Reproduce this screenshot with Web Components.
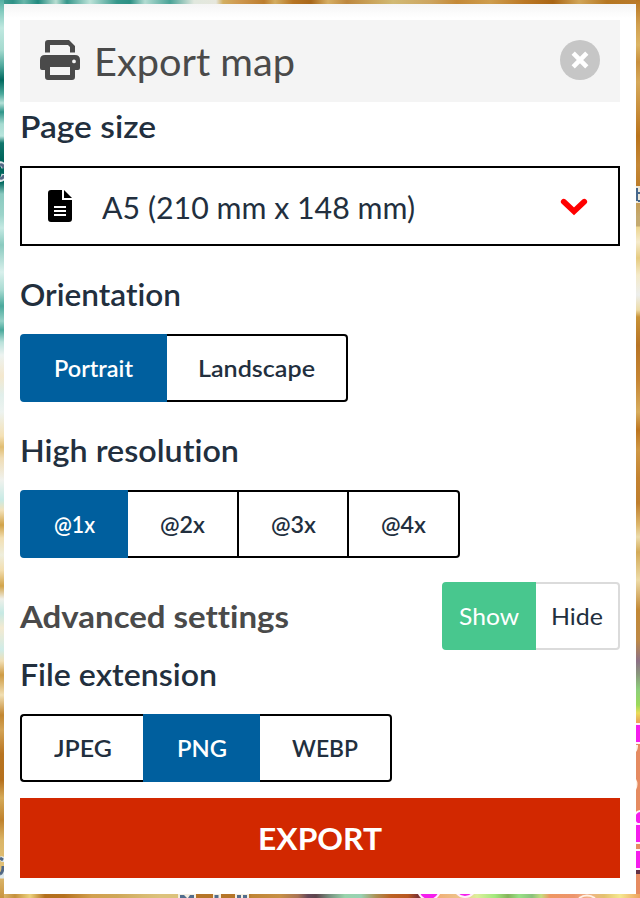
<!DOCTYPE html>
<html lang="en">
<head>
<meta charset="utf-8">
<title>Export map</title>
<style>
html,body{margin:0;padding:0;width:640px;height:898px;overflow:hidden}
body{font-family:Lato,"Open Sans",sans-serif;color:#222f3e}
</style>
</head>
<body>
<map-page></map-page>
<script>
class FitLabel extends HTMLElement {
  connectedCallback() {
    const root = this.attachShadow({mode: 'open'});
    const target = Number(this.getAttribute('width'));
    root.innerHTML = `<style>
      :host{display:block;flex:none;width:${target}px;white-space:pre;line-height:1;font-kerning:normal;font-variant-ligatures:none}
      span{display:inline-block;transform-origin:0 50%}
    </style><span><slot></slot></span>`;
    const span = root.querySelector('span');
    const natural = span.getBoundingClientRect().width;
    span.style.transform = `scaleX(${(target / natural).toFixed(4)})`;
  }
}
customElements.define('fit-label', FitLabel);

class MapBackdrop extends HTMLElement {
  connectedCallback() {
    const vertical = (id, stops) => `<linearGradient id="${id}" gradientUnits="userSpaceOnUse" x1="0" y1="0" x2="0" y2="898">${stops.map(([p, c]) => `<stop offset="${p / 898}" stop-color="${c}"/>`).join('')}</linearGradient>`;
    const horizontal = (id, stops) => `<linearGradient id="${id}" gradientUnits="userSpaceOnUse" x1="0" y1="0" x2="640" y2="0">${stops.map(([p, c]) => `<stop offset="${p / 640}" stop-color="${c}"/>`).join('')}</linearGradient>`;
    this.attachShadow({mode: 'open'}).innerHTML = `<style>:host{display:block;width:640px;height:898px}svg{display:block}</style>
    <svg width="640" height="898" viewBox="0 0 640 898"><defs>
    ${vertical('l', [[0,'#54b0a2'],[12,'#86ccc0'],[28,'#c0e8e0'],[50,'#a5dacf'],[66,'#4fa89c'],[80,'#00695f'],[94,'#4ba89b'],[103,'#b5e1d8'],[112,'#2f9589'],[124,'#a6dbd1'],[136,'#b9e5dd'],[143,'#11766c'],[160,'#00645a'],[182,'#00675e'],[194,'#8ac9bf'],[215,'#9cd4ca'],[228,'#c5e9e3'],[245,'#8acabf'],[272,'#d9f0ec'],[290,'#a9dbd2'],[306,'#4aa99c'],[321,'#95d1c7'],[330,'#49a89b'],[342,'#b9e1da'],[355,'#edf3f1'],[376,'#f4e8ce'],[395,'#e1efeb'],[412,'#edf3f0'],[436,'#f4e1b6'],[447,'#e0bd72'],[458,'#efdcb4'],[480,'#f0f2ee'],[500,'#c8eae5'],[510,'#f3e2bb'],[525,'#d1a349'],[538,'#f2dfb2'],[555,'#eeeedd'],[570,'#f2deb0'],[586,'#d2a44a'],[599,'#eff0ea'],[613,'#c6e9e4'],[628,'#f4ead1'],[650,'#cfece8'],[661,'#f1dfb5'],[675,'#ce9b44'],[695,'#f1dfb3'],[715,'#c28630'],[730,'#d3a356'],[754,'#b87420'],[780,'#b5701d'],[798,'#d5aa59'],[820,'#bf812c'],[840,'#dab466'],[870,'#e2c27a'],[898,'#c89340']])}
    ${vertical('r', [[0,'#b8741f'],[25,'#d1a050'],[45,'#dcb565'],[62,'#c88f3d'],[82,'#d6a95a'],[110,'#c88e3b'],[136,'#b9731b'],[165,'#c48736'],[186,'#bd7d29'],[203,'#c69d56'],[217,'#c4aa70'],[226,'#c4aa70'],[227,'#edd691'],[242,'#f5ebcd'],[258,'#e6cb80'],[275,'#f4eac9'],[295,'#eceeed'],[310,'#eddba6'],[317,'#c89236'],[345,'#b77425'],[380,'#c68533'],[412,'#d7ad5e'],[430,'#bd751f'],[450,'#cf9845'],[478,'#c38230'],[503,'#bf7e2d'],[525,'#ddb76c'],[537,'#ecdcac'],[552,'#d3aa57'],[580,'#eddba7'],[610,'#c28835'],[640,'#bd8946'],[661,'#8c7186'],[674,'#89967c'],[690,'#8dcf7b'],[705,'#9bda5a'],[713,'#e9dc5a'],[721,'#eba95a'],[740,'#e58b62'],[898,'#e78b61']])}
    ${horizontal('t', [[0,'#49a092'],[13,'#2f9287'],[24,'#68b6a9'],[38,'#218a7f'],[56,'#b9ded2'],[67,'#36978b'],[90,'#bde3d9'],[117,'#36978b'],[130,'#2c9084'],[145,'#b3dcd2'],[170,'#4aa397'],[194,'#e1e8de'],[216,'#e6e7dd'],[223,'#d2af61'],[238,'#cf9950'],[264,'#bc7d2e'],[275,'#d3ad60'],[293,'#b67423'],[311,'#a8671a'],[328,'#d6ae63'],[347,'#bd873e'],[374,'#cba65d'],[393,'#d1ba75'],[430,'#cda560'],[457,'#c48937'],[490,'#ce9d4d'],[524,'#bb7825'],[553,'#a96515'],[579,'#d1a558'],[607,'#b57722'],[640,'#b9792a']])}
    ${horizontal('b', [[0,'#e2c178'],[15,'#c5903d'],[30,'#ecd27d'],[45,'#b36f1d'],[64,'#b5711e'],[92,'#d2a04e'],[117,'#cfa758'],[144,'#d8ba71'],[160,'#dcc27c'],[178,'#dcc27c'],[196,'#b57528'],[247,'#b57528'],[252,'#c08535'],[280,'#c79045'],[298,'#a87355'],[308,'#654858'],[316,'#5d444c'],[330,'#789482'],[345,'#99d4ac'],[361,'#98d2b3'],[376,'#ad9054'],[391,'#bc6223'],[408,'#b85720'],[418,'#7b3333'],[438,'#f0af78'],[462,'#edc68b'],[477,'#ddef9c'],[495,'#a2e97d'],[508,'#86b45c'],[519,'#98e286'],[532,'#8ac17c'],[541,'#c4df80'],[550,'#ef9661'],[574,'#ed956c'],[588,'#f1b38a'],[604,'#e4c16f'],[620,'#f5e990'],[640,'#efa15e']])}
    </defs>
    <rect width="640" height="5" fill="url(#t)"/><rect y="893" width="640" height="5" fill="url(#b)"/>
    <rect width="4" height="898" fill="url(#l)"/><rect x="636" width="4" height="894" fill="url(#r)"/>
    <g fill="none" stroke="#dfe8ea" stroke-width="5"><path d="M-1 164Q3 163 4 168M-1 179Q3 181 4 174M0 859Q4 858 4 862M4 868V876H0"/></g>
    <g fill="none" stroke="#526885" stroke-width="3"><path d="M0 165Q3 164 4 168M0 178Q3 179 4 175M0 858L3 860M0 874Q3 873 3 866"/></g>
    <path d="M636 186h4v17h-4z" fill="#ebe6d9"/><path d="M636 188h2v13h-2zM638 192h2v2h-2zM638 200h2v2h-2z" fill="#46678b"/>
    <g fill="#f51ded" stroke="#fff0fa" stroke-width="2"><rect x="634" y="724" width="10" height="19"/><circle cx="641" cy="818" r="7"/><rect x="634" y="824" width="10" height="19"/><rect x="634" y="850" width="10" height="19"/><circle cx="429" cy="889" r="11"/><circle cx="465" cy="886" r="11"/></g>
    <path d="M636 745h2q0 5-2 7zM636 779q3 5 0 11z" fill="#fff1e5"/><path d="M579 898Q587 893 595 898" fill="none" stroke="#fff1e5" stroke-width="2"/>
    <path d="M636 870h4v4h-4z" fill="#633044"/>
    <path d="M178 894h18v4h-18zM213 894h8v4h-8zM235 894h14v4h-14z" fill="#f3eee0"/><path d="M180 895h4l3 3h-7zM190 895h4v3h-6zM214.500 895h4v3h-4zM237 895h4v3h-4zM243 895h4v3h-4z" fill="#526d8d"/>
    </svg>`;
  }
}
customElements.define('map-backdrop', MapBackdrop);

class PanelHeader extends HTMLElement {
  connectedCallback() {
    this.attachShadow({mode: 'open'}).innerHTML = `<style>
    :host{display:flex;box-sizing:border-box;height:82px;background:#f4f4f4;padding:20px 20px 0;color:#4a4a4a;font-size:38px}
    svg{display:block;flex:none} .title{margin:2px auto 0 14px}
    </style>
    <svg width="40" height="40" viewBox="0 0 40 40"><path d="M5 12.500V3Q5 0 8 0H29L35 6V12.500H30V7L28 5H10V12.500Z" fill="#4a4a4a"/><path fill-rule="evenodd" d="M5 15H35Q40 15 40 20V28Q40 30 38 30H35V37Q35 40 32 40H8Q5 40 5 37V30H2Q0 30 0 28V20Q0 15 5 15ZM10 27V35H30V27ZM34 19.500A1.900 1.900 0 1 0 34 23.300A1.900 1.900 0 1 0 34 19.500Z" fill="#4a4a4a"/></svg>
    <fit-label class="title" width="201">Export map</fit-label>
    <svg width="40" height="40" viewBox="0 0 40 40"><circle cx="20" cy="20" r="20" fill="#c6c6c6"/><path d="M13.200 13.200L26.800 26.800M26.800 13.200L13.200 26.800" stroke="#fff" stroke-width="4.600"/></svg>`;
  }
}
customElements.define('panel-header', PanelHeader);

class SizeSelect extends HTMLElement {
  connectedCallback() {
    this.attachShadow({mode: 'open'}).innerHTML = `<style>
    :host{display:flex;box-sizing:border-box;height:80px;border:2px solid #000;padding:0 30px 0 26px;align-items:center;font-size:30.5px}
    svg{display:block;flex:none} fit-label{margin:2px auto 0 30px} .arrow{margin-top:1px}
    </style>
    <svg width="24" height="32" viewBox="0 0 24 32"><path d="M3 0H14V10H24V29Q24 32 21 32H3Q0 32 0 29V3Q0 0 3 0Z"/><path d="M16 0V8H24Z"/><path d="M6 17H18M6 21H18M6 25H18" stroke="#fff" stroke-width="2"/></svg>
    <fit-label width="313">${this.textContent}</fit-label>
    <svg class="arrow" width="28" height="18" viewBox="0 0 28 18"><path d="M3.700 3.600L14 13.300L24.300 3.600" fill="none" stroke="red" stroke-width="5.600" stroke-linecap="round"/></svg>`;
  }
}
customElements.define('size-select', SizeSelect);

class OptionButton extends HTMLElement {
  connectedCallback() {
    this.attachShadow({mode: 'open'}).innerHTML = `<style>
    :host{display:flex;box-sizing:border-box;height:68px;width:var(--w);align-items:center;justify-content:center;border:2px solid var(--line,#000);border-left-width:var(--left,2px);border-right-width:var(--right,2px);background:#fff}
    :host([selected]){background:var(--accent,#005f9e);border-color:var(--accent,#005f9e);color:#fff}
    :host(:first-child){border-radius:4px 0 0 4px} :host(:last-child){border-radius:0 4px 4px 0}
    </style><slot></slot>`;
  }
}
customElements.define('option-button', OptionButton);

class ButtonGroup extends HTMLElement {
  connectedCallback() {
    this.attachShadow({mode: 'open'}).innerHTML = `<style>:host{display:flex;font-size:23px;font-weight:var(--weight,600)}</style><slot></slot>`;
  }
}
customElements.define('button-group', ButtonGroup);

class ExportPanel extends HTMLElement {
  connectedCallback() {
    this.attachShadow({mode: 'open'}).innerHTML = `<style>
    :host{display:block;box-sizing:border-box;width:632px;height:890px;padding:16px;background:linear-gradient(#f5f5f5,#fff 14px)}
    .h{font-size:30.5px;font-weight:600}
    .adv{display:flex;justify-content:space-between;align-items:center;height:68px;margin:24px 0 10px}
    .adv .h{font-weight:700;color:#4a4a4a}
    .adv button-group{--weight:400;--line:#dbdbdb;--accent:#48c78e}
    .row{box-sizing:border-box;height:54px;display:flex;align-items:flex-start}
    .row.first{height:64px;padding-top:9px}
    .row.spaced{height:88px;padding-top:33px}
    .row.last{height:64px;margin-top:-11px;padding-top:10px}
    .export{display:flex;align-items:center;justify-content:center;height:80px;background:#d22800;color:#fff;font-size:30.5px;font-weight:700;margin-top:16px}
    </style>
    <panel-header></panel-header>
    <div class="row first h"><fit-label width="136">Page size</fit-label></div>
    <size-select>A5 (210 mm x 148 mm)</size-select>
    <div class="row spaced h"><fit-label width="161">Orientation</fit-label></div>
    <button-group><option-button selected style="--w:147px"><fit-label width="79">Portrait</fit-label></option-button><option-button style="--w:181px;--left:0px"><fit-label width="117">Landscape</fit-label></option-button></button-group>
    <div class="row spaced h"><fit-label width="219">High resolution</fit-label></div>
    <button-group><option-button selected style="--w:108px"><fit-label width="41">@1x</fit-label></option-button><option-button style="--w:111px;--left:0px"><fit-label width="45">@2x</fit-label></option-button><option-button style="--w:110px;--left:0px"><fit-label width="45">@3x</fit-label></option-button><option-button style="--w:111px;--left:0px"><fit-label width="45">@4x</fit-label></option-button></button-group>
    <div class="adv"><fit-label class="h" width="269">Advanced settings</fit-label><button-group><option-button selected style="--w:94px"><fit-label width="60">Show</fit-label></option-button><option-button style="--w:84px;--left:0px"><fit-label width="52">Hide</fit-label></option-button></button-group></div>
    <div class="row last h"><fit-label width="197">File extension</fit-label></div>
    <button-group style="margin-top:1px"><option-button style="--w:123px;--right:0px"><fit-label width="58">JPEG</fit-label></option-button><option-button selected style="--w:117px"><fit-label width="50">PNG</fit-label></option-button><option-button style="--w:132px;--left:0px"><fit-label width="66">WEBP</fit-label></option-button></button-group>
    <div class="export"><fit-label width="124">EXPORT</fit-label></div>`;
  }
}
customElements.define('export-panel', ExportPanel);

class MapPage extends HTMLElement {
  connectedCallback() {
    this.attachShadow({mode: 'open'}).innerHTML = `<style>:host{display:grid;width:640px;height:898px}map-backdrop,export-panel{grid-area:1/1}export-panel{margin:4px}</style><map-backdrop></map-backdrop><export-panel></export-panel>`;
  }
}
customElements.define('map-page', MapPage);
</script>
</body>
</html>
